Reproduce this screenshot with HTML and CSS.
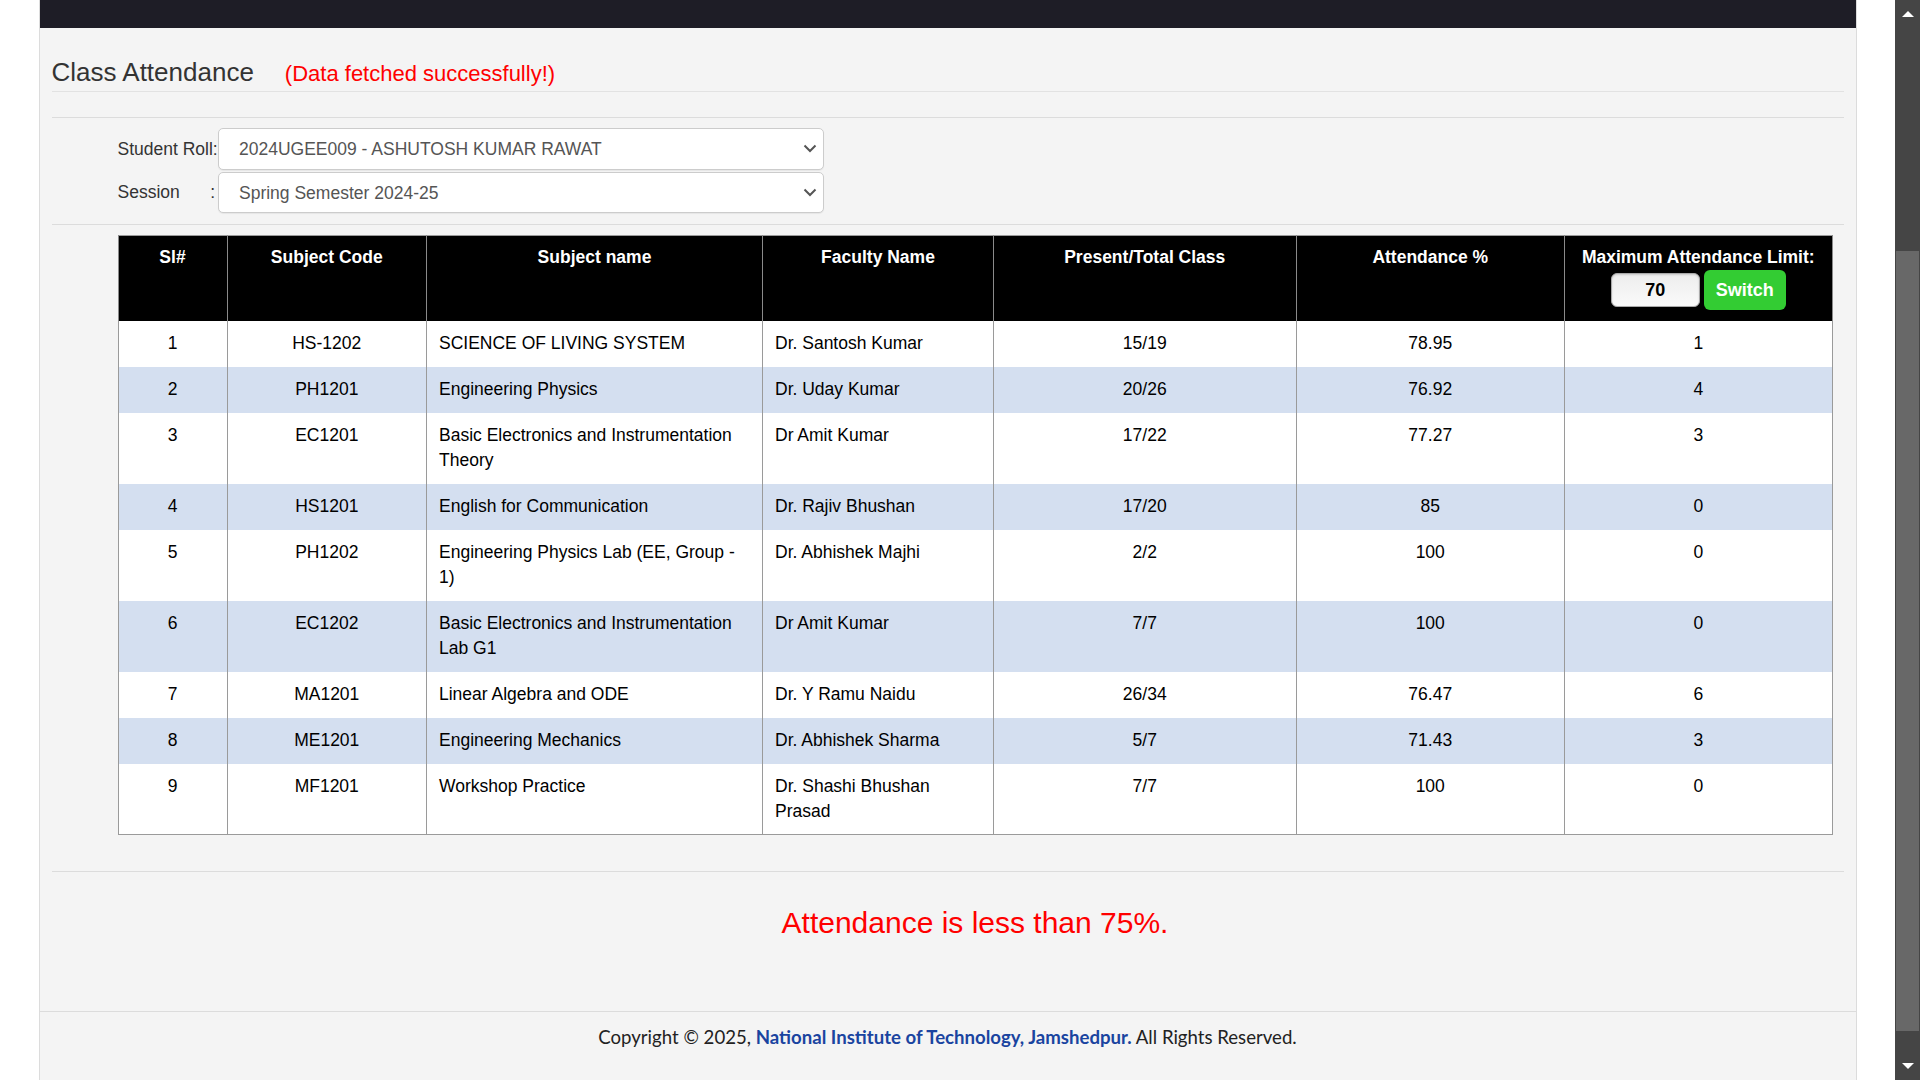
FILE: index.html
```html
<!DOCTYPE html>
<html lang="en">
<head>
<meta charset="utf-8">
<title>Class Attendance</title>
<link rel="stylesheet" href="styles.css">
</head>
<body>
<div class="page">
  <div class="container">
    <div class="topbar"></div>
    <div class="content">
      <div class="heading">
        <h2 class="title">Class Attendance</h2>
        <span class="status">(Data fetched successfully!)</span>
      </div>
      <div class="divider"></div>
      <form class="filters">
        <div class="field">
          <label class="field-label">Student Roll:</label>
          <div class="select-wrap">
            <select class="select"><option>2024UGEE009 - ASHUTOSH KUMAR RAWAT</option></select>
            <svg class="chevron" width="14" height="9" viewBox="0 0 14 9"><polyline points="1.5,1.5 7,7 12.5,1.5" fill="none" stroke="#555" stroke-width="2"/></svg>
          </div>
        </div>
        <div class="field field-second">
          <label class="field-label split"><span>Session</span><span>:</span></label>
          <div class="select-wrap">
            <select class="select"><option>Spring Semester 2024-25</option></select>
            <svg class="chevron" width="14" height="9" viewBox="0 0 14 9"><polyline points="1.5,1.5 7,7 12.5,1.5" fill="none" stroke="#555" stroke-width="2"/></svg>
          </div>
        </div>
      </form>

      <div class="inner">
        <table class="att-table">
          <colgroup>
            <col class="c-sl"><col class="c-code"><col class="c-name"><col class="c-fac"><col class="c-pt"><col class="c-pct"><col class="c-max">
          </colgroup>
          <thead>
            <tr>
              <th>Sl#</th>
              <th>Subject Code</th>
              <th>Subject name</th>
              <th>Faculty Name</th>
              <th>Present/Total Class</th>
              <th>Attendance %</th>
              <th>Maximum Attendance Limit:
                <div class="limit">
                  <input class="limit-input" type="text" value="70">
                  <button class="limit-btn" type="button">Switch</button>
                </div>
              </th>
            </tr>
          </thead>
          <tbody>
            <tr><td class="ctr">1</td><td class="ctr">HS-1202</td><td>SCIENCE OF LIVING SYSTEM</td><td>Dr. Santosh Kumar</td><td class="ctr">15/19</td><td class="ctr">78.95</td><td class="ctr">1</td></tr>
            <tr><td class="ctr">2</td><td class="ctr">PH1201</td><td>Engineering Physics</td><td>Dr. Uday Kumar</td><td class="ctr">20/26</td><td class="ctr">76.92</td><td class="ctr">4</td></tr>
            <tr><td class="ctr">3</td><td class="ctr">EC1201</td><td>Basic Electronics and Instrumentation Theory</td><td>Dr Amit Kumar</td><td class="ctr">17/22</td><td class="ctr">77.27</td><td class="ctr">3</td></tr>
            <tr><td class="ctr">4</td><td class="ctr">HS1201</td><td>English for Communication</td><td>Dr. Rajiv Bhushan</td><td class="ctr">17/20</td><td class="ctr">85</td><td class="ctr">0</td></tr>
            <tr><td class="ctr">5</td><td class="ctr">PH1202</td><td>Engineering Physics Lab (EE, Group - 1)</td><td>Dr. Abhishek Majhi</td><td class="ctr">2/2</td><td class="ctr">100</td><td class="ctr">0</td></tr>
            <tr><td class="ctr">6</td><td class="ctr">EC1202</td><td>Basic Electronics and Instrumentation Lab G1</td><td>Dr Amit Kumar</td><td class="ctr">7/7</td><td class="ctr">100</td><td class="ctr">0</td></tr>
            <tr><td class="ctr">7</td><td class="ctr">MA1201</td><td>Linear Algebra and ODE</td><td>Dr. Y Ramu Naidu</td><td class="ctr">26/34</td><td class="ctr">76.47</td><td class="ctr">6</td></tr>
            <tr><td class="ctr">8</td><td class="ctr">ME1201</td><td>Engineering Mechanics</td><td>Dr. Abhishek Sharma</td><td class="ctr">5/7</td><td class="ctr">71.43</td><td class="ctr">3</td></tr>
            <tr><td class="ctr">9</td><td class="ctr">MF1201</td><td>Workshop Practice</td><td>Dr. Shashi Bhushan Prasad</td><td class="ctr">7/7</td><td class="ctr">100</td><td class="ctr">0</td></tr>
          </tbody>
        </table>
      </div>

      <div class="result-line"></div>
      <div class="inner">
        <p class="warning">Attendance is less than 75%.</p>
      </div>
    </div>
    <footer class="footer">
      Copyright © 2025, <a class="footer-link" href="#">National Institute of Technology, Jamshedpur.</a> All Rights Reserved.
    </footer>
  </div>
</div>
<div class="scrollbar">
  <div class="sb-arrow"><span class="tri-up"></span></div>
  <div class="sb-thumb"></div>
  <div class="sb-fill"></div>
  <div class="sb-arrow"><span class="tri-down"></span></div>
</div>
</body>
</html>
```

FILE: styles.css
```css
html, body {
  margin: 0;
  padding: 0;
  height: 1080px;
  overflow: hidden;
}

body {
  display: flex;
  background: #ffffff;
  font-family: "Liberation Sans", Arial, sans-serif;
  font-size: 17.5px;
  line-height: 25px;
  color: #333;
}

.page {
  flex: 1;
  min-width: 0;
}

.container {
  box-sizing: border-box;
  width: 1818px;
  height: 1080px;
  margin: 0 auto;
  background: #f4f4f4;
  border-left: 1px solid #dcdcdc;
  border-right: 1px solid #dcdcdc;
  display: flex;
  flex-direction: column;
}

.topbar {
  height: 28px;
  background: #1e1d26;
  flex: none;
}

.content {
  padding: 0 12px;
}

.heading {
  display: flex;
  align-items: baseline;
  padding-top: 26px;
  height: 37px;
  border-bottom: 1px solid #e2e2e2;
}

.title {
  margin: 0;
  font-size: 26px;
  line-height: 37px;
  font-weight: normal;
  color: #333;
}

.status {
  margin-left: 31px;
  font-size: 22px;
  color: #ff0000;
}

.divider {
  height: 25px;
  border-bottom: 1px solid #dcdcdc;
}

.filters {
  margin: 0;
  padding: 10px 0 11px 66px;
  border-bottom: 1px solid #dcdcdc;
  display: flex;
  flex-direction: column;
  gap: 2px;
}

.field {
  display: flex;
  align-items: center;
  height: 42px;
}

.field-second {
  height: 41px;
}

.field-label {
  width: 100.5px;
  flex: none;
  color: #333;
}

.split {
  display: flex;
  justify-content: space-between;
  padding-right: 3px;
  box-sizing: border-box;
}

.select-wrap {
  position: relative;
  width: 606px;
  height: 100%;
}

.select {
  -webkit-appearance: none;
  appearance: none;
  box-sizing: border-box;
  width: 100%;
  height: 100%;
  margin: 0;
  padding: 0 40px 0 20px;
  background: #fff;
  border: 1px solid #cccccc;
  border-radius: 5px;
  font-family: "Liberation Sans", Arial, sans-serif;
  font-size: 17.5px;
  color: #555;
  box-shadow: 0 1px 1px rgba(0, 0, 0, 0.06);
}

.chevron {
  position: absolute;
  right: 7px;
  top: 50%;
  margin-top: -5px;
  pointer-events: none;
}

.inner {
  margin: 0 11px 0 66px;
}

.att-table {
  width: 100%;
  margin-top: 10px;
  border-collapse: collapse;
  table-layout: fixed;
  border: 1px solid #9a9a9a;
  background: #fff;
  color: #000;
}

.c-sl { width: 109px; }
.c-code { width: 199.5px; }
.c-name { width: 336px; }
.c-fac { width: 231px; }
.c-pt { width: 302.5px; }
.c-pct { width: 268.5px; }

.att-table th {
  background: #000;
  color: #fff;
  font-weight: bold;
  text-align: center;
  vertical-align: top;
  padding: 9px 6px 11px;
  border: 1px solid #8a8a8a;
  border-top: none;
  border-bottom: none;
}

.att-table td {
  padding: 10px 12px 11px;
  vertical-align: top;
  border-left: 1px solid #9a9a9a;
  border-right: 1px solid #9a9a9a;
}

.att-table tbody tr:last-child td {
  padding-bottom: 10px;
}

.att-table tbody tr:nth-child(even) td {
  background: #d4dff0;
}

.att-table td.ctr {
  text-align: center;
}

.limit {
  display: flex;
  justify-content: center;
  align-items: center;
  gap: 4px;
  height: 40px;
}

.limit-input {
  box-sizing: border-box;
  width: 89px;
  height: 34px;
  margin: 0;
  padding: 0;
  border: 1px solid #a9a9a9;
  border-radius: 6px;
  background: linear-gradient(#ededed, #fafafa);
  box-shadow: inset 0 1px 2px rgba(0, 0, 0, 0.15);
  text-align: center;
  font-family: "Liberation Sans", Arial, sans-serif;
  font-size: 18px;
  font-weight: bold;
  color: #000;
}

.limit-btn {
  box-sizing: border-box;
  width: 82px;
  height: 40px;
  margin: 0;
  border: none;
  border-radius: 6px;
  background: #33cc33;
  color: #fff;
  font-family: "Liberation Sans", Arial, sans-serif;
  font-size: 18px;
  font-weight: bold;
}

.result-line {
  margin-top: 36px;
  border-top: 1px solid #dcdcdc;
}

.warning {
  margin: 34px 0 0;
  height: 73px;
  text-align: center;
  font-size: 30px;
  line-height: 33px;
  color: #ff0000;
}

.footer {
  margin-top: auto;
  height: 55px;
  box-sizing: border-box;
  padding-top: 13px;
  border-top: 1px solid #dcdcdc;
  text-align: center;
  font-family: Lato, "Open Sans", sans-serif;
  font-size: 18.6px;
  color: #222;
  margin-bottom: 14px;
}

.footer-link {
  color: #1a44a0;
  font-weight: bold;
  text-decoration: none;
}

.scrollbar {
  width: 25px;
  flex: none;
  height: 1080px;
  background: #454545;
  display: flex;
  flex-direction: column;
  align-items: center;
}

.sb-arrow {
  height: 28px;
  width: 100%;
  display: flex;
  align-items: center;
  justify-content: center;
  flex: none;
}

.tri-up {
  width: 0;
  height: 0;
  border-left: 6px solid transparent;
  border-right: 6px solid transparent;
  border-bottom: 6px solid #fff;
}

.tri-down {
  width: 0;
  height: 0;
  border-left: 6px solid transparent;
  border-right: 6px solid transparent;
  border-top: 6px solid #fff;
}

.sb-thumb {
  margin-top: 223px;
  width: 23px;
  height: 780px;
  background: #686868;
  flex: none;
}

.sb-fill {
  flex: 1;
}
```
